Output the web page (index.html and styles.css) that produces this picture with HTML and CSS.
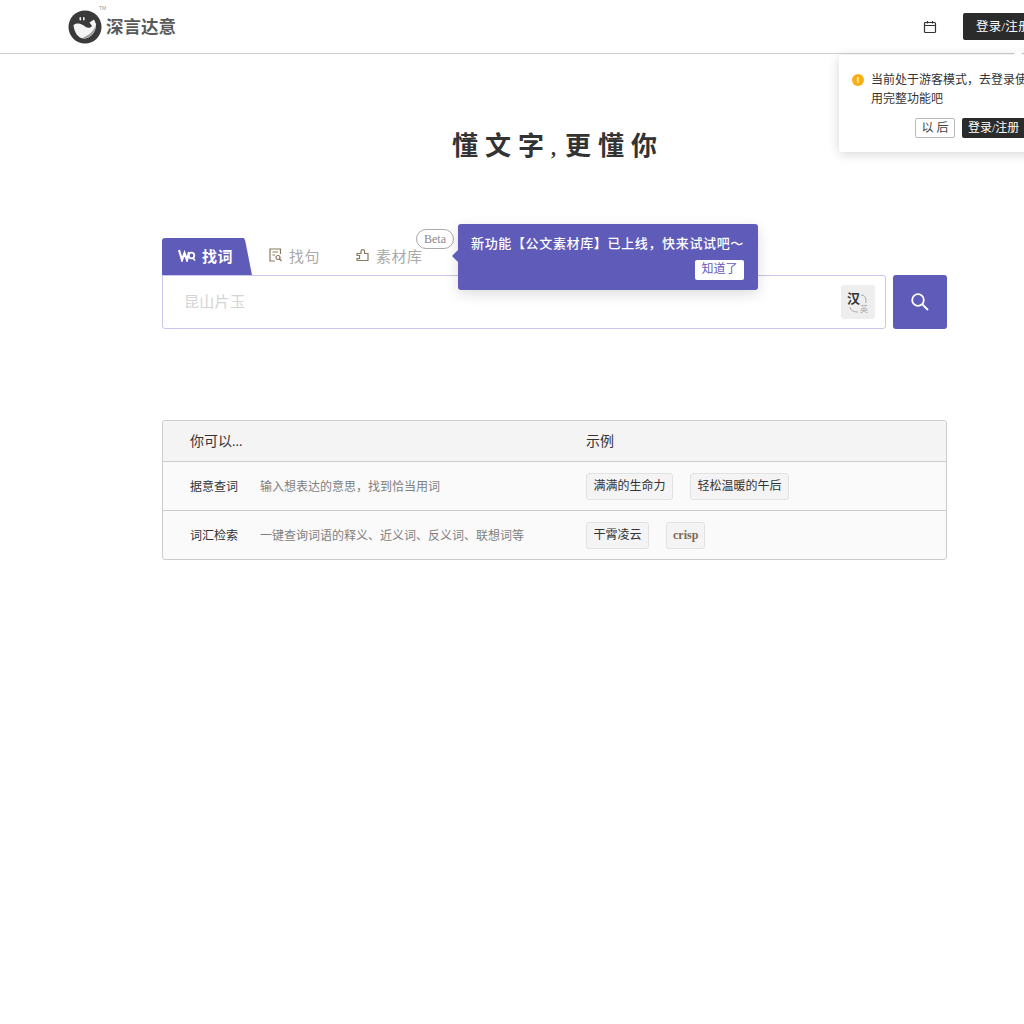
FILE: index.html
```html
<!DOCTYPE html>
<html>
<head>
    <meta charset="utf-8">
    <title>深言达意</title>
    <link rel="stylesheet" href="styles.css">
</head>
<body>
    <div class="page">
        <div class="header">
            <div class="logo">
                <svg class="logo-mark" width="34" height="34" viewBox="0 0 34 34">
                    <circle cx="17" cy="17" r="16.5" fill="#3a3a3a"/>
                    <path d="M5.5 15 C10 12 14 14 17 16.5 C20 18.5 23 18 24 16 L21.5 12.5 L26 9.5 L28 14 C28.5 21 23 28.5 16 28.5 C10 28.5 6 22 5.5 15 Z" fill="#f4f4f4"/>
                    <path d="M14 28 C20 26 25 22 28 15 C28 22 22 28.5 16 28.5 Z" fill="#a0a0a0"/>
                    <rect x="11.5" y="7" width="1.6" height="3.5" rx="0.8" fill="#f4f4f4"/>
                    <rect x="15" y="7" width="1.6" height="3.5" rx="0.8" fill="#f4f4f4"/>
                </svg>
                <span class="logo-tm">TM</span>
                <span class="logo-text">深言达意</span>
            </div>
            <div class="header-right">
                <svg class="calendar" width="14" height="14" viewBox="0 0 14 14" fill="none" stroke="#333" stroke-width="1.2">
                    <rect x="1.5" y="2.5" width="11" height="10" rx="1"/>
                    <path d="M1.5 5.5 H12.5 M4.5 1 V3.5 M9.5 1 V3.5"/>
                </svg>
                <div class="login-btn">登录/注册</div>
            </div>
        </div>

        <div class="guest-pop">
            <div class="guest-msg">
                <span class="warn-dot">!</span>
                <span>当前处于游客模式，去登录使用完整功能吧</span>
            </div>
            <div class="guest-actions">
                <span class="later-btn">以 后</span>
                <span class="pop-login">登录/注册</span>
            </div>
        </div>

        <h1 class="slogan">懂文字<span class="comma">,</span>更懂你</h1>

        <div class="search-area">
            <div class="tabs">
                <div class="tab active">
                    <svg width="18" height="14" viewBox="0 0 18 14" fill="none" stroke="#fff" stroke-width="2.2">
                        <path d="M1 2 L4 12 L6.5 5 L9 12 L11 4"/>
                        <circle cx="13.5" cy="7.5" r="2.8" stroke-width="1.8"/>
                        <path d="M15 10 L17 12.5" stroke-width="1.6"/>
                    </svg>
                    <span>找词</span>
                </div>
                <div class="tab">
                    <svg width="13" height="14" viewBox="0 0 13 14" fill="none" stroke="#8a7a5e" stroke-width="1.2">
                        <path d="M11.5 6 V1 H1 V13 H6"/>
                        <path d="M3.5 4 H9 M3.5 7 H6"/>
                        <circle cx="9" cy="9.5" r="2"/>
                        <path d="M10.5 11 L12.5 13"/>
                    </svg>
                    <span>找句</span>
                </div>
                <div class="tab">
                    <svg width="14" height="14" viewBox="0 0 14 14" fill="none" stroke="#8a7a5e" stroke-width="1.2">
                        <path d="M1 5.5 H5 V3.5 A1.8 1.8 0 1 1 8.6 3.5 V5.5 H12 V12.5 H1 V10.5 H3.5 V7.5 H1 Z"/>
                    </svg>
                    <span>素材库</span>
                </div>
                <span class="beta">Beta</span>
                <div class="new-tip">
                    <div class="new-tip-text">新功能【公文素材库】已上线，快来试试吧～</div>
                    <div class="new-tip-foot"><span class="got-it">知道了</span></div>
                </div>
            </div>
            <div class="search-row">
                <div class="search-input">
                    <span class="placeholder">昆山片玉</span>
                    <div class="lang-switch">
                        <span class="lang-zh">汉</span>
                        <span class="lang-en">英</span>
                        <svg class="lang-arcs" width="22" height="22" viewBox="0 0 22 22" fill="none" stroke="#aaa" stroke-width="1">
                            <path d="M14 4 C17 4 19 6 19 9 V12"/>
                            <path d="M3 16 C3 19 6 21 11 21"/>
                        </svg>
                    </div>
                </div>
                <div class="search-btn">
                    <svg width="20" height="20" viewBox="0 0 20 20" fill="none" stroke="#fff" stroke-width="1.8">
                        <circle cx="8" cy="8" r="5.8"/>
                        <path d="M12.5 12.5 L18 18"/>
                    </svg>
                </div>
            </div>
        </div>

        <div class="guide">
            <div class="guide-head">
                <div class="col-main">你可以...</div>
                <div class="col-example">示例</div>
            </div>
            <div class="guide-row">
                <div class="col-main">
                    <span class="guide-name">据意查词</span>
                    <span class="guide-desc">输入想表达的意思，找到恰当用词</span>
                </div>
                <div class="col-example">
                    <span class="chip">满满的生命力</span>
                    <span class="chip">轻松温暖的午后</span>
                </div>
            </div>
            <div class="guide-row">
                <div class="col-main">
                    <span class="guide-name">词汇检索</span>
                    <span class="guide-desc">一键查询词语的释义、近义词、反义词、联想词等</span>
                </div>
                <div class="col-example">
                    <span class="chip">干霄凌云</span>
                    <span class="chip chip-en">crisp</span>
                </div>
            </div>
        </div>
    </div>
</body>
</html>
```

FILE: styles.css
```css
html, body {
    margin: 0;
    padding: 0;
    overflow: hidden;
    height: 100%;
    background: #fff;
}
body {
    font-family: "Liberation Serif", "Noto Sans CJK SC", serif;
    color: #333;
}
.page {
    width: 1110px;
    position: relative;
}
.header {
    height: 53px;
    border-bottom: 1px solid #d0d0d0;
    display: flex;
    align-items: center;
    justify-content: space-between;
    padding: 0 50px 0 68px;
    box-sizing: content-box;
}
.logo {
    display: flex;
    align-items: center;
    position: relative;
}
.logo-mark {
    display: block;
}
.logo-tm {
    position: absolute;
    left: 31px;
    top: -5px;
    font-size: 5px;
    color: #999;
    font-family: "Liberation Sans", sans-serif;
}
.logo-text {
    margin-left: 4px;
    padding-bottom: 2px;
    font-size: 17.5px;
    font-weight: bold;
    color: #5a5a5a;
    white-space: nowrap;
}
.header-right {
    display: flex;
    align-items: center;
    gap: 26px;
}
.calendar {
    display: block;
}
.login-btn {
    width: 97px;
    height: 27px;
    line-height: 28px;
    box-sizing: border-box;
    padding-left: 13px;
    background: #2b2b2b;
    color: #fff;
    font-size: 12.5px;
    letter-spacing: 0.3px;
    white-space: nowrap;
    border-radius: 2px;
}
.guest-pop {
    position: absolute;
    left: 839px;
    top: 55px;
    width: 214px;
    height: 97px;
    box-sizing: border-box;
    padding: 16px 25px 0 13px;
    background: #fff;
    border-radius: 3px;
    box-shadow: 0 2px 12px rgba(0, 0, 0, 0.16);
    font-size: 12px;
    line-height: 19px;
    color: #333;
}
.guest-pop::before {
    content: "";
    position: absolute;
    left: 174px;
    top: -5px;
    border-left: 5px solid transparent;
    border-right: 5px solid transparent;
    border-bottom: 5px solid #fff;
}
.guest-msg {
    display: flex;
    gap: 7px;
}
.warn-dot {
    flex: none;
    width: 12px;
    height: 12px;
    margin-top: 3px;
    border-radius: 50%;
    background: #faad14;
    color: #fff;
    font-size: 9px;
    line-height: 12px;
    text-align: center;
    font-family: "Liberation Sans", sans-serif;
    font-weight: bold;
}
.guest-actions {
    display: flex;
    gap: 7px;
    margin-top: 9px;
    margin-left: 63px;
}
.later-btn, .pop-login {
    flex: none;
    height: 20px;
    line-height: 18px;
    box-sizing: border-box;
    border-radius: 2px;
    white-space: nowrap;
}
.later-btn {
    width: 40px;
    border: 1px solid #bbb;
    text-align: center;
    color: #444;
}
.pop-login {
    width: 68px;
    padding-left: 6px;
    line-height: 20px;
    background: #2b2b2b;
    color: #fff;
}
.slogan {
    margin: 73px 0 0;
    padding-left: 6px;
    height: 40px;
    line-height: 40px;
    text-align: center;
    font-size: 26px;
    font-weight: bold;
    letter-spacing: 7px;
    color: #333;
}
.comma {
    font-size: 20px;
    letter-spacing: 9px;
}
.search-area {
    margin: 71px 163px 0 162px;
}
.tabs {
    display: flex;
    height: 37px;
    position: relative;
}
.tab {
    display: flex;
    align-items: center;
    gap: 6px;
    padding-bottom: 3px;
    height: 37px;
    box-sizing: border-box;
    color: #aaa;
    font-size: 15px;
    letter-spacing: 0.5px;
    white-space: nowrap;
    width: 87px;
    padding-left: 17px;
}
.tab:nth-child(2) {
    gap: 7px;
}
.tab.active {
    width: 90px;
    padding-left: 16px;
    color: #fff;
    font-weight: bold;
    background: #5f5bb8;
    border-radius: 3px 3px 0 0;
    clip-path: polygon(0 0, 91% 0, 92.5% 8%, 100% 100%, 0 100%);
}
.beta {
    position: absolute;
    left: 254px;
    top: -9px;
    width: 38px;
    height: 20px;
    box-sizing: border-box;
    border: 1px solid #aaa;
    border-radius: 10px;
    background: #fff;
    color: #888;
    font-size: 12px;
    line-height: 18px;
    text-align: center;
}
.new-tip {
    position: absolute;
    left: 296px;
    top: -14px;
    width: 300px;
    height: 66px;
    box-sizing: border-box;
    padding: 10px 14px 0 13px;
    background: #5f5bb8;
    border-radius: 3px;
    box-shadow: 0 4px 14px rgba(0, 0, 0, 0.14);
    z-index: 2;
}
.new-tip::before {
    content: "";
    position: absolute;
    left: -6px;
    top: 26px;
    border-top: 6px solid transparent;
    border-bottom: 6px solid transparent;
    border-right: 6px solid #5f5bb8;
}
.new-tip-text {
    color: #fff;
    font-size: 13px;
    font-weight: 500;
    letter-spacing: 0.65px;
    line-height: 19px;
    white-space: nowrap;
}
.new-tip-foot {
    display: flex;
    justify-content: flex-end;
    margin-top: 7px;
}
.got-it {
    width: 49px;
    height: 20px;
    line-height: 19px;
    background: #fff;
    color: #5f5bb8;
    font-size: 12px;
    text-align: center;
    border-radius: 2px;
}
.search-row {
    display: flex;
    gap: 7px;
}
.search-input {
    flex: 1;
    height: 54px;
    box-sizing: border-box;
    border: 1px solid #c9c5ec;
    border-radius: 0 3px 3px 3px;
    display: flex;
    align-items: center;
    justify-content: space-between;
    padding: 0 10px 0 21px;
}
.placeholder {
    padding-bottom: 4px;
    font-size: 15px;
    letter-spacing: 0.3px;
    color: #d4d4d4;
}
.lang-switch {
    width: 34px;
    height: 34px;
    background: #eee;
    border-radius: 3px;
    position: relative;
}
.lang-zh {
    position: absolute;
    left: 6px;
    top: 5px;
    font-size: 13px;
    line-height: 18px;
    font-weight: bold;
    color: #333;
}
.lang-en {
    position: absolute;
    left: 19px;
    top: 20px;
    font-size: 8px;
    line-height: 10px;
    color: #aaa;
}
.lang-arcs {
    position: absolute;
    left: 6px;
    top: 6px;
}
.search-btn {
    width: 54px;
    height: 54px;
    background: #5f5bb8;
    border-radius: 3px;
    display: flex;
    align-items: center;
    justify-content: center;
}
.guide {
    margin: 91px 163px 0 162px;
    border: 1px solid #ccc;
    border-radius: 3px;
    background: #fafafa;
    font-size: 12px;
}
.guide-head, .guide-row {
    display: flex;
    align-items: center;
    padding-left: 27px;
}
.guide-head {
    height: 40px;
    background: #f4f4f4;
    border-bottom: 1px solid #ccc;
    font-size: 14px;
    color: #333;
    border-radius: 3px 3px 0 0;
}
.guide-head .col-main, .guide-head .col-example {
    padding-bottom: 2px;
}
.guide-row {
    height: 48px;
}
.guide-row + .guide-row {
    border-top: 1px solid #ccc;
}
.col-main {
    width: 396px;
    display: flex;
    align-items: center;
}
.col-example {
    display: flex;
    align-items: center;
    gap: 17px;
}
.guide-name {
    width: 70px;
    color: #333;
}
.guide-desc {
    color: #808080;
}
.chip {
    height: 27px;
    line-height: 24px;
    box-sizing: border-box;
    padding: 0 6.5px;
    background: #f4f4f4;
    border: 1px solid #e2e2e2;
    border-radius: 3px;
    color: #333;
}
.chip-en {
    padding: 0 6px;
    color: #7a6a55;
    font-weight: bold;
}
```
